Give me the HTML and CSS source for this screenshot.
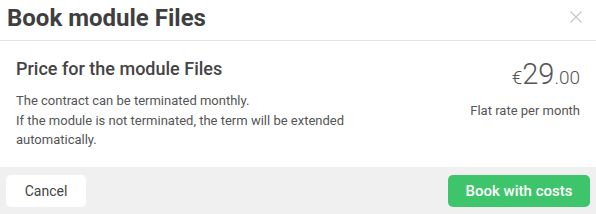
FILE: index.html
```html
<!DOCTYPE html>
<html>
<head>
<meta charset="utf-8">
<link rel="stylesheet" href="styles.css">
</head>
<body>
<div class="modal">
  <div class="header">
    <h1 class="title">Book module Files</h1>
    <span class="close" aria-label="Close">
      <svg width="12" height="12" viewBox="0 0 12 12"><path d="M0.5 0.5L11.5 11.5M11.5 0.5L0.5 11.5" stroke="#c8c8c8" stroke-width="1.2" fill="none"/></svg>
    </span>
  </div>
  <div class="body">
    <div class="info">
      <h2 class="subtitle">Price for the module Files</h2>
      <p class="desc">The contract can be terminated monthly.<br>If the module is not terminated, the term will be extended automatically.</p>
    </div>
    <div class="price">
      <div class="amount"><span class="cur">€</span><span class="int">29</span><span class="dec">.00</span></div>
      <div class="period">Flat rate per month</div>
    </div>
  </div>
  <div class="footer">
    <button class="btn cancel">Cancel</button>
    <button class="btn book">Book with costs</button>
  </div>
</div>
</body>
</html>
```
FILE: styles.css
```css
html, body {
  margin: 0;
  padding: 0;
  background: #fff;
}
body {
  font-family: Roboto, "Liberation Sans", sans-serif;
  color: #444;
}
.modal {
  width: 596px;
  height: 214px;
  display: flex;
  flex-direction: column;
}
.header {
  height: 40px;
  border-bottom: 1px solid #e3e3e3;
  display: flex;
  align-items: center;
  justify-content: space-between;
  padding: 0 14px 0 7px;
  box-sizing: content-box;
}
.title {
  margin: 0;
  font-size: 24px;
  font-weight: 700;
  color: #3f3f3f;
  line-height: 1;
  position: relative;
  top: -2px;
}
.close {
  display: flex;
  width: 12px;
  height: 12px;
  position: relative;
  top: -3px;
}
.body {
  flex: 1;
  display: flex;
  justify-content: space-between;
  padding: 16px 16px 0 16px;
}
.subtitle {
  margin: 0;
  font-size: 18px;
  font-weight: 500;
  color: #444;
  line-height: 24px;
}
.desc {
  margin: 10px 0 0 0;
  font-size: 13px;
  line-height: 19.5px;
  color: #555;
  width: 340px;
}
.price {
  text-align: right;
  padding-top: 1px;
}
.amount {
  color: #555;
  font-weight: 300;
  line-height: 32px;
}
.cur {
  font-size: 19px;
}
.int {
  font-size: 29px;
}
.dec {
  font-size: 19px;
}
.period {
  margin-top: 7px;
  font-size: 13px;
  color: #555;
  line-height: 18px;
}
.footer {
  height: 47px;
  background: #f0f0f0;
  display: flex;
  align-items: center;
  justify-content: space-between;
  padding: 0 6px;
  box-sizing: border-box;
}
.btn {
  height: 32px;
  border: none;
  border-radius: 5px;
  font-family: Roboto, "Liberation Sans", sans-serif;
  cursor: pointer;
}
.cancel {
  width: 80px;
  background: #fff;
  color: #444;
  font-size: 14px;
}
.book {
  width: 142px;
  background: #3ec46b;
  color: #fff;
  font-size: 15px;
  font-weight: 500;
}
```
